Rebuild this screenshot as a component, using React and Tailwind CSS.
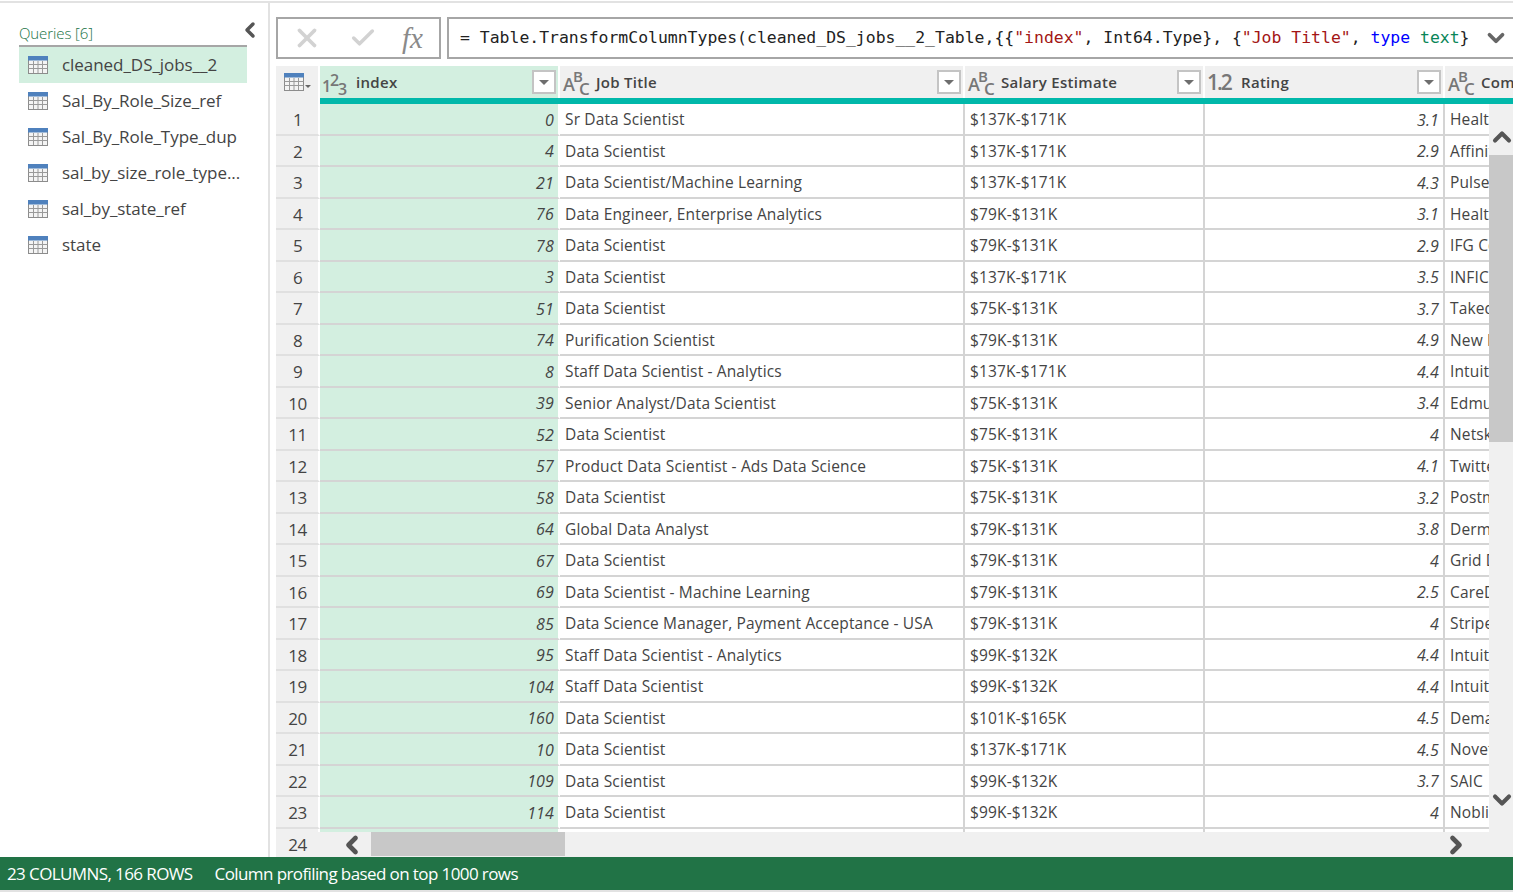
import React from "react";
import { X, Check, ChevronDown, ChevronUp, ChevronLeft, ChevronRight } from "lucide-react";

const queries = [
  "cleaned_DS_jobs__2",
  "Sal_By_Role_Size_ref",
  "Sal_By_Role_Type_dup",
  "sal_by_size_role_type...",
  "sal_by_state_ref",
  "state",
];

const rows = [
  [0, "Sr Data Scientist", "$137K-$171K", "3.1", "Health"],
  [4, "Data Scientist", "$137K-$171K", "2.9", "Affinity"],
  [21, "Data Scientist/Machine Learning", "$137K-$171K", "4.3", "Pulse"],
  [76, "Data Engineer, Enterprise Analytics", "$79K-$131K", "3.1", "Health"],
  [78, "Data Scientist", "$79K-$131K", "2.9", "IFG Co"],
  [3, "Data Scientist", "$137K-$171K", "3.5", "INFICON"],
  [51, "Data Scientist", "$75K-$131K", "3.7", "Takeda"],
  [74, "Purification Scientist", "$79K-$131K", "4.9", "New Era"],
  [8, "Staff Data Scientist - Analytics", "$137K-$171K", "4.4", "Intuit"],
  [39, "Senior Analyst/Data Scientist", "$75K-$131K", "3.4", "Edmund"],
  [52, "Data Scientist", "$75K-$131K", "4", "Netskope"],
  [57, "Product Data Scientist - Ads Data Science", "$75K-$131K", "4.1", "Twitter"],
  [58, "Data Scientist", "$75K-$131K", "3.2", "Postmates"],
  [64, "Global Data Analyst", "$79K-$131K", "3.8", "Dermalogica"],
  [67, "Data Scientist", "$79K-$131K", "4", "Grid Dynamics"],
  [69, "Data Scientist - Machine Learning", "$79K-$131K", "2.5", "CareDx"],
  [85, "Data Science Manager, Payment Acceptance - USA", "$79K-$131K", "4", "Stripe"],
  [95, "Staff Data Scientist - Analytics", "$99K-$132K", "4.4", "Intuit"],
  [104, "Staff Data Scientist", "$99K-$132K", "4.4", "Intuit"],
  [160, "Data Scientist", "$101K-$165K", "4.5", "Demandbase"],
  [10, "Data Scientist", "$137K-$171K", "4.5", "Novetta"],
  [109, "Data Scientist", "$99K-$132K", "3.7", "SAIC"],
  [114, "Data Scientist", "$99K-$132K", "4", "Nobli"],
  [118, "Data Scientist", "$99K-$132K", "4", "Nobli"],
];

const TableIcon = () => (
  <svg width="20" height="18" viewBox="0 0 20 18" className="shrink-0">
    <rect x="0.5" y="0.5" width="19" height="17" fill="#f4f4f4" stroke="#8c8c8c" />
    <rect x="0" y="0" width="20" height="4.5" fill="#4f81bd" />
    <path d="M0.5 8.5H19.5M0.5 12.5H19.5M5.5 5V17M10 5V17M14.5 5V17" stroke="#9a9a9a" fill="none" />
  </svg>
);

const AbcIcon = () => (
  <span className="relative block w-[26px] h-[26px] shrink-0 text-[#777] font-semibold leading-none">
    <span className="absolute left-[1px] top-[6px] text-[18px]">A</span>
    <span className="absolute left-[11px] top-0 text-[15px]">B</span>
    <span className="absolute left-[17px] top-[11px] text-[17px]">C</span>
  </span>
);

const NumIcon = () => (
  <span className="relative block w-[26px] h-[26px] shrink-0 text-[#777] text-[16px] font-semibold leading-none">
    <span className="absolute left-0 top-[9px]">1</span>
    <span className="absolute left-[8px] top-[3px]">2</span>
    <span className="absolute left-[16px] top-[12px]">3</span>
  </span>
);

const FilterButton = () => (
  <div className="w-[24px] h-[24px] border-2 border-[#c4c4c4] bg-white flex items-center justify-center shrink-0">
    <div className="w-0 h-0 border-x-[5px] border-x-transparent border-t-[5px] border-t-[#6e6e6e]" />
  </div>
);

const HeaderCell = ({ icon, label, width, filter = true }) => (
  <div className={`${width} h-full flex items-center shrink-0 border-r-2 border-white pl-[2px] pr-[2px]`}>
    {icon}
    <span className="ml-[8px] flex-1 text-[15px] font-semibold tracking-[0.3px] text-[#444] whitespace-nowrap leading-none">
      {label}
    </span>
    {filter && <FilterButton />}
  </div>
);

const App = () => {
  return (
    <div
      className="w-[1513px] h-[892px] overflow-hidden bg-white flex flex-col text-[#444]"
      style={{ fontFamily: '"Open Sans", "Noto Sans", sans-serif' }}
    >
      <div className="h-[2px] mt-[1px] bg-[#e2e2e2] shrink-0" />
      <div className="flex-1 min-h-0 flex">
        {/* queries pane */}
        <aside className="w-[270px] shrink-0 border-r-2 border-[#e2e2e2] pl-[19px] pr-[21px] pt-[20px]">
          <div className="flex items-center justify-between h-[21px]">
            <span className="text-[15px] font-light text-[#217346] tracking-[-0.1px] leading-none">Queries [6]</span>
            <ChevronLeft size={24} strokeWidth={3.5} className="text-[#555] mr-[-15px] mt-[-7px]" />
          </div>
          <div className="h-[2px] mt-px bg-[#a6a6a6]" />
          {queries.map((q, i) => (
            <div
              key={q}
              className={`h-[36px] flex items-center pl-[9px] gap-[14px] text-[17px] tracking-[-0.05px] text-[#444] whitespace-nowrap ${
                i === 0 ? "bg-[#d3efe0]" : ""
              }`}
            >
              <TableIcon />
              {q}
            </div>
          ))}
        </aside>

        {/* main */}
        <main className="flex-1 min-w-0 pl-[6px] flex flex-col">
          <div className="h-[42px] mt-[14px] flex shrink-0">
            <div className="w-[165px] border-2 border-[#a6a6a6] flex items-center shrink-0">
              <X size={30} strokeWidth={3} className="text-[#d2d2d2] ml-[14px]" />
              <Check size={28} strokeWidth={3} className="text-[#d2d2d2] ml-[27px]" />
              <span
                className="ml-[25px] text-[29px] italic text-[#8a8a8a] leading-none"
                style={{ fontFamily: '"Liberation Serif", serif' }}
              >
                fx
              </span>
            </div>
            <div className="flex-1 ml-[6px] border-2 border-[#a6a6a6] border-r-0 flex items-center min-w-0">
              <div
                className="flex-1 min-w-0 pl-[11px] text-[16.45px] whitespace-pre overflow-hidden text-[#222]"
                style={{ fontFamily: '"DejaVu Sans Mono", monospace' }}
              >
                {"= Table.TransformColumnTypes(cleaned_DS_jobs__2_Table,{{"}
                <span className="text-[#a31515]">"index"</span>
                {", Int64.Type}, {"}
                <span className="text-[#a31515]">"Job Title"</span>
                {", "}
                <span className="text-[#0000ff]">type</span> <span className="text-[#098658]">text</span>
                {"}"}
              </div>
              <ChevronDown size={26} strokeWidth={3.5} className="text-[#666] mr-[4px] shrink-0" />
            </div>
          </div>

          <div className="mt-[7px] flex-1 min-h-0 relative overflow-hidden">
            {/* header */}
            <div className="h-[32px] flex bg-[#f0f0f0]">
              <div className="w-[44px] shrink-0 flex items-center pl-[8px] border-r-2 border-white">
                <TableIcon />
                <div className="w-0 h-0 ml-[1px] mt-[8px] border-x-[3px] border-x-transparent border-t-[3px] border-t-[#666]" />
              </div>
              <div className="flex bg-[#d3efe0]">
                <HeaderCell icon={<NumIcon />} label="index" width="w-[240px]" />
              </div>
              <HeaderCell icon={<AbcIcon />} label="Job Title" width="w-[405px]" />
              <HeaderCell icon={<AbcIcon />} label="Salary Estimate" width="w-[240px]" />
              <HeaderCell
                icon={
                  <span className="text-[21px] font-semibold text-[#777] tracking-[-2px] w-[26px] leading-none shrink-0">
                    1.2
                  </span>
                }
                label="Rating"
                width="w-[240px]"
              />
              <HeaderCell icon={<AbcIcon />} label="Company Name" width="w-[240px]" filter={false} />
            </div>
            {/* teal rule */}
            <div className="h-[6px] flex bg-[#01b8aa]">
              <div className="w-[44px] shrink-0 bg-[#f0f0f0] border-r-2 border-white" />
            </div>

            {rows.map((r, i) => (
              <div key={i} className="h-[31.5px] flex text-[15.5px] tracking-[0.14px] text-[#444] whitespace-nowrap">
                <div className="w-[44px] shrink-0 bg-[#f0f0f0] border-b-2 border-r-2 border-[#e0e0e0] border-r-white flex items-center justify-center text-[17px] tracking-[-0.5px] pl-[1px] pt-[2px]">
                  {i + 1}
                </div>
                <div className="w-[240px] shrink-0 bg-[#d3efe0] border-b-2 border-r-2 border-[#d4d4d4] border-r-white flex items-center justify-end pr-[4px] pt-[2px] italic text-[16px]">
                  {r[0]}
                </div>
                <div className="w-[405px] shrink-0 border-b-2 border-r-2 border-[#d4d4d4] flex items-center pl-[5px] pt-[2px]">{r[1]}</div>
                <div className="w-[240px] shrink-0 border-b-2 border-r-2 border-[#d4d4d4] flex items-center pl-[5px] pt-[2px]">{r[2]}</div>
                <div className="w-[240px] shrink-0 border-b-2 border-r-2 border-[#d4d4d4] flex items-center justify-end pr-[4px] pt-[2px] italic text-[16px]">{r[3]}</div>
                <div className="w-[240px] shrink-0 border-b-2 border-[#d4d4d4] flex items-center pl-[5px] pt-[2px]">{r[4]}</div>
              </div>
            ))}

            {/* vertical scrollbar */}
            <div className="absolute right-0 top-[38px] bottom-[25px] w-[24px] bg-[#f0f0f0]">
              <ChevronUp size={28} strokeWidth={3.5} className="absolute left-[-1px] top-[19px] text-[#555]" />
              <div className="absolute left-0 right-0 top-[51px] h-[287px] bg-[#c8c8c8]" />
              <ChevronDown size={28} strokeWidth={3.5} className="absolute left-[-1px] bottom-[18px] text-[#555]" />
            </div>

            {/* horizontal scrollbar */}
            <div className="absolute left-[42px] right-0 bottom-0 h-[25px] bg-[#f0f0f0]">
              <ChevronLeft size={28} strokeWidth={4} className="absolute left-[20px] top-[-1px] text-[#555]" />
              <div className="absolute left-[53px] top-0 w-[194px] h-[24px] bg-[#c8c8c8]" />
              <ChevronRight size={28} strokeWidth={4} className="absolute right-[43px] top-[-1px] text-[#555]" />
            </div>
          </div>
        </main>
      </div>

      <div className="h-[33px] shrink-0 bg-[#217346] text-white text-[17px] tracking-[-0.6px] flex items-center pl-[7px] gap-[22px] whitespace-nowrap">
        <span>23 COLUMNS, 166 ROWS</span>
        <span>Column profiling based on top 1000 rows</span>
      </div>
      <div className="h-[2px] shrink-0 bg-[#e2e2e2]" />
    </div>
  );
};

export default App;
